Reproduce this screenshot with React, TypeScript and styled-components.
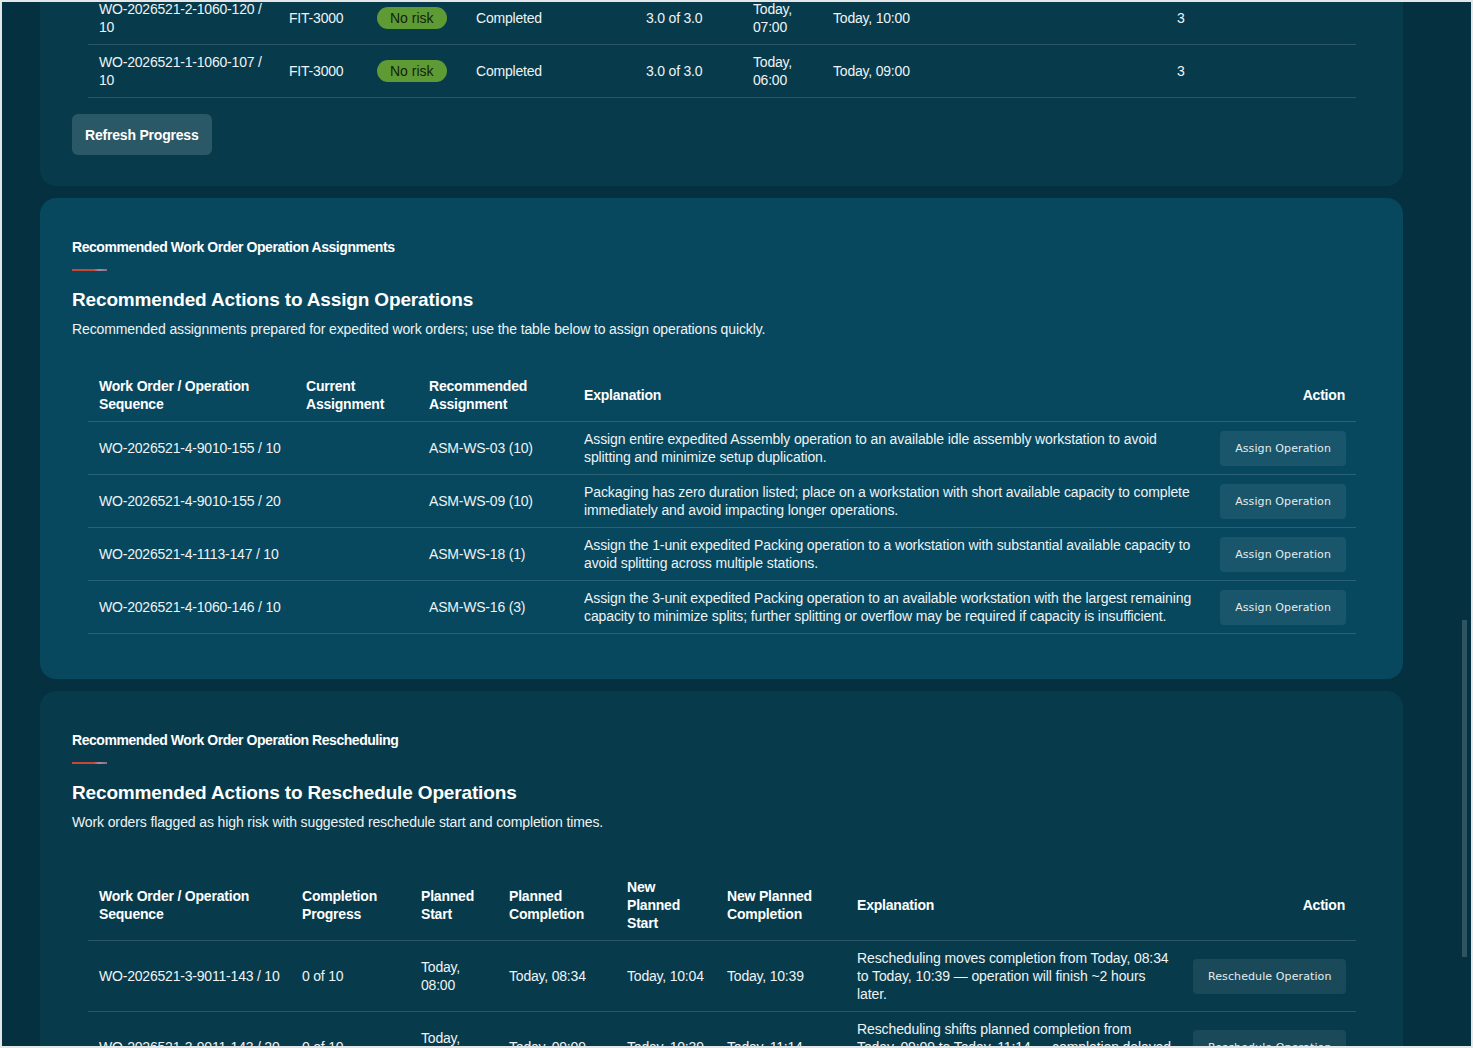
import styled, { createGlobalStyle } from 'styled-components';

const Global = createGlobalStyle`
  html, body { margin: 0; padding: 0; height: 100%; }
  body {
    font-family: "Liberation Sans", Arial, sans-serif;
    background: #05303f;
    color: #eef3f5;
  }
  * { box-sizing: border-box; }
`;

interface ProgressRow {
  wo: string;
  item: string;
  risk: string;
  status: string;
  qty: string;
  start: string;
  end: string;
  ops: string;
}

interface AssignRow {
  wo: string;
  current: string;
  recommended: string;
  explanation: string;
}

interface RescheduleRow {
  wo: string;
  progress: string;
  start: string;
  completion: string;
  newStart: string;
  newCompletion: string;
  explanation: string;
}

const progressRows: ProgressRow[] = [
  {
    wo: 'WO-2026521-2-1060-120 / 10',
    item: 'FIT-3000',
    risk: 'No risk',
    status: 'Completed',
    qty: '3.0 of 3.0',
    start: 'Today, 07:00',
    end: 'Today, 10:00',
    ops: '3',
  },
  {
    wo: 'WO-2026521-1-1060-107 / 10',
    item: 'FIT-3000',
    risk: 'No risk',
    status: 'Completed',
    qty: '3.0 of 3.0',
    start: 'Today, 06:00',
    end: 'Today, 09:00',
    ops: '3',
  },
];

const assignRows: AssignRow[] = [
  {
    wo: 'WO-2026521-4-9010-155 / 10',
    current: '',
    recommended: 'ASM-WS-03 (10)',
    explanation:
      'Assign entire expedited Assembly operation to an available idle assembly workstation to avoid splitting and minimize setup duplication.',
  },
  {
    wo: 'WO-2026521-4-9010-155 / 20',
    current: '',
    recommended: 'ASM-WS-09 (10)',
    explanation:
      'Packaging has zero duration listed; place on a workstation with short available capacity to complete immediately and avoid impacting longer operations.',
  },
  {
    wo: 'WO-2026521-4-1113-147 / 10',
    current: '',
    recommended: 'ASM-WS-18 (1)',
    explanation:
      'Assign the 1-unit expedited Packing operation to a workstation with substantial available capacity to avoid splitting across multiple stations.',
  },
  {
    wo: 'WO-2026521-4-1060-146 / 10',
    current: '',
    recommended: 'ASM-WS-16 (3)',
    explanation:
      'Assign the 3-unit expedited Packing operation to an available workstation with the largest remaining capacity to minimize splits; further splitting or overflow may be required if capacity is insufficient.',
  },
];

const rescheduleRows: RescheduleRow[] = [
  {
    wo: 'WO-2026521-3-9011-143 / 10',
    progress: '0 of 10',
    start: 'Today, 08:00',
    completion: 'Today, 08:34',
    newStart: 'Today, 10:04',
    newCompletion: 'Today, 10:39',
    explanation:
      'Rescheduling moves completion from Today, 08:34 to Today, 10:39 — operation will finish ~2 hours later.',
  },
  {
    wo: 'WO-2026521-3-9011-143 / 20',
    progress: '0 of 10',
    start: 'Today, 08:34',
    completion: 'Today, 09:09',
    newStart: 'Today, 10:39',
    newCompletion: 'Today, 11:14',
    explanation:
      'Rescheduling shifts planned completion from Today, 09:09 to Today, 11:14 — completion delayed by ~2 hours.',
  },
];

export default function App() {
  return (
    <>
      <Global />
      <Viewport>
        <Page>
          <Card $offset={-42}>
            <Table>
              <colgroup>
                {[190, 88, 99, 170, 107, 80, 344, 190].map((w, i) => (
                  <col key={i} style={{ width: w }} />
                ))}
              </colgroup>
              <tbody>
                {progressRows.map((r) => (
                  <tr key={r.wo}>
                    <Td>{r.wo}</Td>
                    <Td>{r.item}</Td>
                    <Td>
                      <Badge>{r.risk}</Badge>
                    </Td>
                    <Td>{r.status}</Td>
                    <Td>{r.qty}</Td>
                    <Td>{r.start}</Td>
                    <Td>{r.end}</Td>
                    <Td>{r.ops}</Td>
                  </tr>
                ))}
              </tbody>
            </Table>
            <RefreshButton>Refresh Progress</RefreshButton>
          </Card>

          <Card $tone="blue">
            <Eyebrow>Recommended Work Order Operation Assignments</Eyebrow>
            <Accent />
            <Title>Recommended Actions to Assign Operations</Title>
            <Subtitle>
              Recommended assignments prepared for expedited work orders; use the table below to assign
              operations quickly.
            </Subtitle>
            <Table $gap={31}>
              <colgroup>
                {[207, 123, 155, 636, 147].map((w, i) => (
                  <col key={i} style={{ width: w }} />
                ))}
              </colgroup>
              <thead>
                <tr>
                  <Th>Work Order / Operation Sequence</Th>
                  <Th>Current Assignment</Th>
                  <Th>Recommended Assignment</Th>
                  <Th>Explanation</Th>
                  <Th $right>Action</Th>
                </tr>
              </thead>
              <tbody>
                {assignRows.map((r) => (
                  <tr key={r.wo}>
                    <Td>{r.wo}</Td>
                    <Td>{r.current}</Td>
                    <Td>{r.recommended}</Td>
                    <Td $prose>{r.explanation}</Td>
                    <Td $right>
                      <ActionButton>Assign Operation</ActionButton>
                    </Td>
                  </tr>
                ))}
              </tbody>
            </Table>
          </Card>

          <Card>
            <Eyebrow>Recommended Work Order Operation Rescheduling</Eyebrow>
            <Accent />
            <Title>Recommended Actions to Reschedule Operations</Title>
            <Subtitle>Work orders flagged as high risk with suggested reschedule start and completion times.</Subtitle>
            <Table $gap={39}>
              <colgroup>
                {[203, 119, 88, 118, 100, 130, 336, 174].map((w, i) => (
                  <col key={i} style={{ width: w }} />
                ))}
              </colgroup>
              <thead>
                <tr>
                  <Th>Work Order / Operation Sequence</Th>
                  <Th>Completion Progress</Th>
                  <Th>Planned Start</Th>
                  <Th>Planned Completion</Th>
                  <Th>New Planned Start</Th>
                  <Th>New Planned Completion</Th>
                  <Th>Explanation</Th>
                  <Th $right>Action</Th>
                </tr>
              </thead>
              <tbody>
                {rescheduleRows.map((r) => (
                  <tr key={r.wo}>
                    <Td>{r.wo}</Td>
                    <Td>{r.progress}</Td>
                    <Td>{r.start}</Td>
                    <Td>{r.completion}</Td>
                    <Td>{r.newStart}</Td>
                    <Td>{r.newCompletion}</Td>
                    <Td $prose>{r.explanation}</Td>
                    <Td $right>
                      <ActionButton>Reschedule Operation</ActionButton>
                    </Td>
                  </tr>
                ))}
              </tbody>
            </Table>
          </Card>
        </Page>
        <ScrollThumb />
      </Viewport>
    </>
  );
}

const Viewport = styled.div`
  position: relative;
  height: 100vh;
  overflow: hidden;
  border: 2px solid #e4e7e8;
  background: #05303f;
`;

const Page = styled.div`
  display: flex;
  flex-direction: column;
  gap: 12px;
  padding: 0 68px 0 38px;
`;

const Card = styled.section<{ $tone?: 'blue'; $offset?: number }>`
  margin-top: ${(p) => p.$offset ?? 0}px;
  padding: 40px 32px 45px;
  border-radius: 16px;
  background: ${(p) => (p.$tone === 'blue' ? '#07485f' : '#073b4c')};

  &:first-child {
    padding: 32px 32px 31px;
  }
`;

const Eyebrow = styled.div`
  font-size: 14px;
  font-weight: 700;
  line-height: 18px;
  letter-spacing: -0.45px;
  color: #ffffff;
`;

const Accent = styled.div`
  width: 35px;
  height: 2px;
  margin-top: 13px;
  background: linear-gradient(90deg, #c74634 0%, #c74634 62%, #a38ca6 78%, #8d6b80 100%);
`;

const Title = styled.h2`
  margin: 16px 0 0;
  font-size: 19px;
  font-weight: 700;
  line-height: 26px;
  letter-spacing: -0.15px;
  color: #ffffff;
`;

const Subtitle = styled.p`
  margin: 7px 0 0;
  font-size: 14px;
  line-height: 18px;
  letter-spacing: -0.12px;
  color: #eef3f5;
`;

const Table = styled.table<{ $gap?: number }>`
  width: calc(100% - 32px);
  margin: ${(p) => p.$gap ?? 0}px 16px 0;
  border-collapse: collapse;
  table-layout: fixed;
  font-size: 14px;
  line-height: 18px;
`;

const Th = styled.th<{ $right?: boolean }>`
  padding: 8px 11px;
  text-align: ${(p) => (p.$right ? 'right' : 'left')};
  vertical-align: middle;
  font-weight: 700;
  letter-spacing: -0.2px;
  color: #ffffff;
  border-bottom: 1px solid rgba(255, 255, 255, 0.14);
`;

const Td = styled.td<{ $right?: boolean; $prose?: boolean }>`
  padding: 8px ${(p) => (p.$right ? 10 : 11)}px 8px 11px;
  text-align: ${(p) => (p.$right ? 'right' : 'left')};
  vertical-align: middle;
  letter-spacing: ${(p) => (p.$prose ? -0.1 : -0.2)}px;
  color: #eef3f5;
  border-bottom: 1px solid rgba(255, 255, 255, 0.14);
`;

const Badge = styled.span`
  display: inline-block;
  padding: 2px 13px;
  border-radius: 11px;
  background: #5f9b35;
  color: #10240a;
  font-size: 14px;
  line-height: 18px;
  letter-spacing: 0;
`;

const RefreshButton = styled.button`
  margin-top: 16px;
  height: 41px;
  padding: 0 13px;
  border: none;
  border-radius: 6px;
  background: rgba(255, 255, 255, 0.15);
  color: #ffffff;
  font-family: "Liberation Sans", Arial, sans-serif;
  font-size: 14px;
  font-weight: 700;
  letter-spacing: -0.2px;
`;

const ActionButton = styled.button`
  height: 35px;
  padding: 0 15px;
  border: none;
  border-radius: 4px;
  background: rgba(255, 255, 255, 0.08);
  color: #e3ecee;
  font-family: "DejaVu Sans", sans-serif;
  font-size: 11px;
  letter-spacing: 0.1px;
  white-space: nowrap;
`;

const ScrollThumb = styled.div`
  position: absolute;
  top: 618px;
  right: 4px;
  width: 5px;
  height: 337px;
  background: #2e5361;
`;
